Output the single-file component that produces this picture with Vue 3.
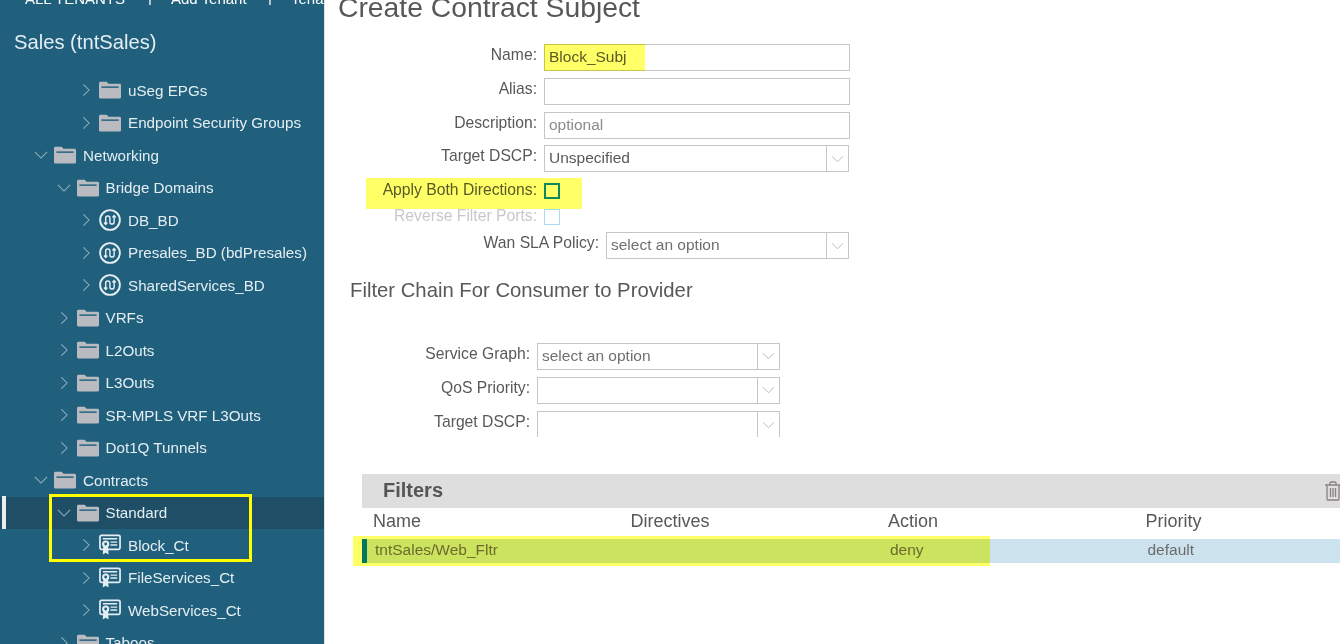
<script setup>
const tree = [
  { label: 'uSeg EPGs', level: 3, icon: 'folder', open: false },
  { label: 'Endpoint Security Groups', level: 3, icon: 'folder', open: false },
  { label: 'Networking', level: 1, icon: 'folder', open: true },
  { label: 'Bridge Domains', level: 2, icon: 'folder', open: true },
  { label: 'DB_BD', level: 3, icon: 'bd', open: false },
  { label: 'Presales_BD (bdPresales)', level: 3, icon: 'bd', open: false },
  { label: 'SharedServices_BD', level: 3, icon: 'bd', open: false },
  { label: 'VRFs', level: 2, icon: 'folder', open: false },
  { label: 'L2Outs', level: 2, icon: 'folder', open: false },
  { label: 'L3Outs', level: 2, icon: 'folder', open: false },
  { label: 'SR-MPLS VRF L3Outs', level: 2, icon: 'folder', open: false },
  { label: 'Dot1Q Tunnels', level: 2, icon: 'folder', open: false },
  { label: 'Contracts', level: 1, icon: 'folder', open: true },
  { label: 'Standard', level: 2, icon: 'folder', open: true, selected: true },
  { label: 'Block_Ct', level: 3, icon: 'cert', open: false },
  { label: 'FileServices_Ct', level: 3, icon: 'cert', open: false },
  { label: 'WebServices_Ct', level: 3, icon: 'cert', open: false },
  { label: 'Taboos', level: 2, icon: 'folder', open: false }
];
</script>

<template>
  <div class="page">
    <aside class="sidebar">
      <div class="topNav">
        <span class="navAll">ALL TENANTS</span>
        <span class="navSep">|</span>
        <span class="navAdd">Add Tenant</span>
        <span class="navSep">|</span>
        <span>Tenant Search</span>
      </div>
      <h2 class="tenantTitle">Sales (tntSales)</h2>
      <ul class="tree">
        <li
          v-for="item in tree"
          :key="item.label"
          class="treeRow"
          :class="['level' + item.level, { selected: item.selected }]"
        >
          <svg class="chevron" viewBox="0 0 16 16">
            <path v-if="item.open" d="M1 4.500l7 7 7-7" />
            <path v-else d="M5 1.500l6.500 6.500-6.500 6.500" />
          </svg>
          <svg v-if="item.icon === 'folder'" class="treeIcon" viewBox="0 0 23 18">
            <path class="folderFill" d="M0 2Q0 .5 1.500 .5H8l2 2h11.500Q23 2.500 23 4V16.500Q23 18 21.500 18H1.500Q0 18 0 16.500Z" />
            <path class="folderLine" d="M2.500 6H20.500" />
          </svg>
          <svg v-else-if="item.icon === 'bd'" class="treeIcon" viewBox="0 0 23 23">
            <circle class="bdRing" cx="11.500" cy="11.500" r="10.300" />
            <path class="bdWave" d="M7 16V9.500a2.200 2.200 0 0 1 4.400 0v4a2.200 2.200 0 0 0 4.400 0V7" />
            <path class="bdWave" d="M5.300 14.200L7 16.200l1.700-2M14.100 8.800l1.700-2 1.700 2" />
          </svg>
          <svg v-else class="treeIcon" viewBox="0 0 23 22">
            <rect class="certCard" x="1" y="1" width="21" height="14.500" rx="1.500" />
            <path class="certLine" d="M4 4.500H19M12 8H19M12 11H19" />
            <circle class="certSeal" cx="7" cy="10" r="3.800" />
            <path class="certRibbon" d="M4.500 13l-.5 8 3-2 3 2-.5-8Z" />
            <circle class="certDot" cx="7" cy="10" r="1.500" />
          </svg>
          <span class="treeLabel">{{ item.label }}</span>
        </li>
      </ul>
      <div class="selectedMark"></div>
    </aside>

    <main class="content">
      <h1 class="formTitle">Create Contract Subject</h1>

      <div class="form">
        <div class="field">
          <label>Name:</label>
          <div class="input wide">Block_Subj</div>
        </div>
        <div class="field">
          <label>Alias:</label>
          <div class="input wide"></div>
        </div>
        <div class="field">
          <label>Description:</label>
          <div class="input wide placeholder">optional</div>
        </div>
        <div class="field">
          <label>Target DSCP:</label>
          <div class="input select wide">
            <span class="selectValue">Unspecified</span>
            <span class="selectArrow"><svg viewBox="0 0 14 8"><path d="M1 1l6 6 6-6" /></svg></span>
          </div>
        </div>
        <div class="field checkField">
          <label>Apply Both Directions:</label>
          <span class="check active"></span>
        </div>
        <div class="field checkField reverse">
          <label>Reverse Filter Ports:</label>
          <span class="check"></span>
        </div>
        <div class="field wan">
          <label>Wan SLA Policy:</label>
          <div class="input select wanSelect">
            <span class="selectValue muted">select an option</span>
            <span class="selectArrow"><svg viewBox="0 0 14 8"><path d="M1 1l6 6 6-6" /></svg></span>
          </div>
        </div>
      </div>

      <h3 class="chainTitle">Filter Chain For Consumer to Provider</h3>

      <div class="chainForm">
        <div class="field">
          <label>Service Graph:</label>
          <div class="input select chainSelect">
            <span class="selectValue muted">select an option</span>
            <span class="selectArrow"><svg viewBox="0 0 14 8"><path d="M1 1l6 6 6-6" /></svg></span>
          </div>
        </div>
        <div class="field">
          <label>QoS Priority:</label>
          <div class="input select chainSelect">
            <span class="selectValue"></span>
            <span class="selectArrow"><svg viewBox="0 0 14 8"><path d="M1 1l6 6 6-6" /></svg></span>
          </div>
        </div>
        <div class="field">
          <label>Target DSCP:</label>
          <div class="input select chainSelect openBottom">
            <span class="selectValue"></span>
            <span class="selectArrow"><svg viewBox="0 0 14 8"><path d="M1 1l6 6 6-6" /></svg></span>
          </div>
        </div>
      </div>

      <section class="filters">
        <div class="filtersBar">
          <span>Filters</span>
          <svg class="trash" viewBox="0 0 18 20">
            <path d="M1 4H17M6 4V2Q6 1 7 1H11Q12 1 12 2V4M3 4V18Q3 19 4 19H14Q15 19 15 18V4M6.500 7V16M9 7V16M11.500 7V16" />
          </svg>
        </div>
        <div class="filterCols head">
          <span>Name</span><span>Directives</span><span>Action</span><span>Priority</span>
        </div>
        <div class="filterCols row">
          <span>tntSales/Web_Fltr</span><span></span><span>deny</span><span>default</span>
        </div>
      </section>
    </main>

    <!-- marker highlights drawn over the screenshot -->
    <div class="mark nameMark"></div>
    <div class="mark applyMark"></div>
    <div class="mark rowMark"></div>
    <div class="boxMark"></div>
  </div>
</template>

<style>
html, body {
  margin: 0;
  background: #fff;
  overflow: hidden;
}
</style>

<style scoped>
.page {
  position: relative;
  display: flex;
  width: 1340px;
  height: 644px;
  overflow: hidden;
  font-family: "Liberation Sans", Arial, sans-serif;
  font-size: 15.500px;
  color: #58585b;
}

/* sidebar */
.sidebar {
  position: relative;
  flex: 0 0 324px;
  height: 644px;
  overflow: hidden;
  background: #20607d;
  color: #e4edf2;
  border-right: 1px solid #e3e3e3;
}

.topNav {
  display: flex;
  height: 14px;
  margin-top: -9px;
  padding-left: 25px;
  line-height: 16px;
  font-size: 15px;
  color: #fff;
  white-space: nowrap;
  overflow: hidden;
}

.topNav span { flex: none; }

.navAll { width: 123px; }
.navSep { width: 23px; }
.navAdd { width: 97px; }

.tenantTitle {
  margin: 0;
  padding-left: 14px;
  height: 69px;
  line-height: 74px;
  font-size: 20.200px;
  font-weight: 400;
}

.tree {
  list-style: none;
  margin: 0;
  padding: 0;
}

.treeRow {
  display: flex;
  align-items: center;
  height: 32.5px;
  white-space: nowrap;
  font-size: 15.200px;
}

.level1 { padding-left: 34px; }
.level2 { padding-left: 56.500px; }
.level3 { padding-left: 79px; }

.selected { background: #1f4f67; }

.selectedMark {
  position: absolute;
  left: 2px;
  top: 496px;
  width: 4px;
  height: 33px;
  background: #e9eef1;
}

.chevron {
  flex: none;
  width: 14px;
  height: 14px;
  margin-right: 6px;
  fill: none;
  stroke: #93aebb;
  stroke-width: 1.200;
}

.treeIcon {
  flex: none;
  width: 22px;
  height: 22px;
  margin-right: 7px;
}

.folderFill { fill: #b9bbc0; }
.folderLine { stroke: #20607d; stroke-width: 1.500; fill: none; }

.bdRing { fill: none; stroke: #e4edf2; stroke-width: 2; }
.bdWave { fill: none; stroke: #e4edf2; stroke-width: 1.500; }

.certCard { fill: #20607d; stroke: #e4edf2; stroke-width: 1.800; }
.certLine { stroke: #e4edf2; stroke-width: 1.500; fill: none; }
.certSeal { fill: #e4edf2; }
.certRibbon { fill: #e4edf2; }
.certDot { fill: #20607d; }

/* main form */
.content {
  flex: 1;
  min-width: 0;
}

.formTitle {
  margin: -8px 0 0;
  padding-left: 13px;
  height: 52px;
  line-height: 30px;
  font-size: 28.300px;
  font-weight: 400;
  color: #58585b;
}

.field {
  display: flex;
  gap: 7px;
  margin-bottom: 6.800px;
}

.field label {
  flex: 0 0 212px;
  text-align: right;
  line-height: 21px;
  font-size: 15.700px;
  white-space: nowrap;
}

.input {
  box-sizing: border-box;
  display: flex;
  align-items: center;
  height: 27px;
  padding: 0 0 1px 4px;
  border: 1px solid #c6c6c6;
  background: #fff;
}

.wide { width: 306px; }
.placeholder { color: #8c8c8c; }
.muted { color: #6f6f6f; }

.select { padding-bottom: 0; width: 305px; }

.selectValue { flex: 1; padding-bottom: 1px; }

.selectArrow {
  display: flex;
  align-items: center;
  justify-content: center;
  flex: 0 0 21px;
  height: 100%;
  border-left: 1px solid #c6c6c6;
}

.selectArrow svg {
  width: 13px;
  height: 8px;
  fill: none;
  stroke: #b5b5b5;
  stroke-width: 1;
}

.checkField {
  height: 26px;
  margin-bottom: 0;
}

.check {
  box-sizing: border-box;
  width: 16px;
  height: 16px;
  margin-top: 4px;
  border: 1px solid #abd9ef;
}

/* blue channel is high because the marker on top multiplies it down */
.check.active {
  border: 2px solid #0b8ae0;
}

.reverse { height: 27px; }
.reverse label { color: #c8c8c8; }

.wan label { flex-basis: 274px; }
.wanSelect { width: 243px; }

.chainTitle {
  margin: 0;
  padding: 11px 0 0 25px;
  height: 77px;
  box-sizing: border-box;
  line-height: 26px;
  font-size: 20.300px;
  font-weight: 400;
}

.chainForm .field label { flex-basis: 205px; }
.chainSelect { width: 243px; }

.chainForm .field { margin-bottom: 7px; }
.chainForm .field:last-child { margin-bottom: 0; }
.chainForm { height: 94px; overflow: hidden; }

.openBottom { border-bottom: none; height: 27px; }

.filters {
  margin: 37px 0 0 37px;
}

.filtersBar {
  position: relative;
  height: 34px;
  padding-left: 21px;
  line-height: 32px;
  background: #dedede;
  font-size: 20px;
  font-weight: 700;
  color: #555;
}

.trash {
  position: absolute;
  left: 962px;
  top: 7px;
  width: 18px;
  height: 20px;
  fill: none;
  stroke: #8a8082;
  stroke-width: 1.300;
}

.filterCols {
  display: grid;
  grid-template-columns: 257.500px 257.500px 257.500px 1fr;
}

.head {
  height: 31px;
  padding-left: 11px;
  line-height: 27px;
  font-size: 18px;
}

.row {
  box-sizing: border-box;
  height: 24px;
  line-height: 22px;
  background: #cce3ee;
  border-left: 5px solid #007ae0;
  padding-left: 8px;
  color: #6b6b6e;
}

/* annotations */
.mark {
  position: absolute;
  background: #ffff66;
  mix-blend-mode: multiply;
}

.nameMark { left: 544px; top: 44px; width: 101px; height: 27px; }
.applyMark { left: 366px; top: 178px; width: 216px; height: 31px; }
.rowMark { left: 353px; top: 536px; width: 637px; height: 30px; }

.boxMark {
  position: absolute;
  left: 49px;
  top: 494px;
  width: 203px;
  height: 68px;
  box-sizing: border-box;
  border: 3px solid #ffff00;
}
</style>
